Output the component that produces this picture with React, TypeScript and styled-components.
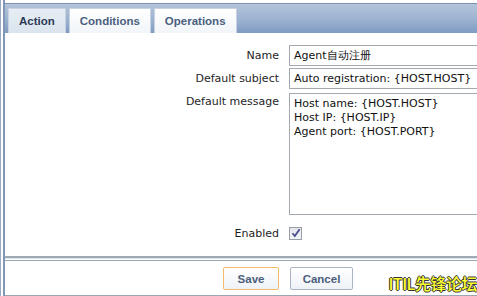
import React from 'react';
import styled, { createGlobalStyle } from 'styled-components';

const GlobalStyle = createGlobalStyle`
  html, body {
    margin: 0;
    padding: 0;
    background: #ffffff;
    overflow: hidden;
  }
  body {
    font-family: "DejaVu Sans", Verdana, sans-serif;
    font-size: 11px;
    color: #222222;
  }
`;

const tabs = ['Action', 'Conditions', 'Operations'];

export default function App() {
  return (
    <>
      <GlobalStyle />
      <Shell>
        <Panel>
          <TabStrip>
            {tabs.map((tab, index) => (
              <Tab key={tab} active={index === 0}>{tab}</Tab>
            ))}
          </TabStrip>

          <FormBody>
            <Label>Name</Label>
            <TextInput>Agent自动注册</TextInput>

            <Label>Default subject</Label>
            <TextInput>Auto registration: {'{HOST.HOST}'}</TextInput>

            <Label top>Default message</Label>
            <TextArea>
              <div>Host name: {'{HOST.HOST}'}</div>
              <div>Host IP: {'{HOST.IP}'}</div>
              <div>Agent port: {'{HOST.PORT}'}</div>
            </TextArea>

            <Label>Enabled</Label>
            <CheckboxCell>
              <Checkbox>
                <svg width="10" height="10" viewBox="0 0 10 10">
                  <path d="M1.5 5.2 L3.8 8 L8.6 1.2" fill="none" stroke="#4a4f8e" strokeWidth="1.8" />
                </svg>
              </Checkbox>
            </CheckboxCell>
          </FormBody>

          <Divider />

          <Footer>
            <Button primary>Save</Button>
            <Button>Cancel</Button>
          </Footer>
        </Panel>
        <Watermark>ITIL先锋论坛</Watermark>
      </Shell>
    </>
  );
}

const Shell = styled.div`
  position: relative;
  width: 477px;
  height: 296px;
  padding-left: 1px;
  box-sizing: border-box;
  border-left: 1px solid #9aaac0;
  overflow: hidden;
`;

const Panel = styled.div`
  display: flex;
  flex-direction: column;
  height: 296px;
  margin-left: 1px;
  border-left: 2px solid #8197b5;
`;

const TabStrip = styled.div`
  display: flex;
  align-items: flex-end;
  gap: 3px;
  height: 29px;
  margin-top: 3px;
  padding-left: 3px;
  border-top: 1px solid #7d92b0;
  background: linear-gradient(#b3c5db, #9cb2d0 55%, #7e9bc3);
`;

const Tab = styled.div<{ active?: boolean }>`
  height: 24px;
  line-height: 25px;
  padding: 0 10px;
  font-family: "Liberation Sans", Arial, sans-serif;
  font-weight: bold;
  font-size: 11.5px;
  color: ${p => (p.active ? '#2c3a58' : '#4b607f')};
  background: ${p => (p.active ? 'linear-gradient(#e6edf4, #dbe4ee)' : 'linear-gradient(#ffffff, #f1f5f9)')};
  border: 1px solid #c7d3e1;
  border-bottom: none;
`;

const FormBody = styled.div`
  display: grid;
  grid-template-columns: 274px 200px;
  column-gap: 10px;
  row-gap: 2px;
  align-items: center;
  align-content: start;
  padding-top: 12px;
  height: 222px;
  box-sizing: border-box;
`;

const Label = styled.div<{ top?: boolean }>`
  text-align: right;
  align-self: ${p => (p.top ? 'start' : 'center')};
  padding-top: ${p => (p.top ? '4px' : '0')};
  color: #1e1e1e;
  white-space: nowrap;
`;

const TextInput = styled.div`
  width: 220px;
  height: 19px;
  line-height: 19px;
  padding: 0 4px;
  border: 1px solid #a4a9b0;
  white-space: nowrap;
  color: #111111;
`;

const TextArea = styled.div`
  width: 220px;
  height: 114px;
  padding: 3px 4px;
  margin: 2px 0 9px;
  border: 1px solid #a4a9b0;
  line-height: 14px;
  color: #111111;
  white-space: nowrap;
`;

const CheckboxCell = styled.div`
  display: flex;
  align-items: center;
  height: 14px;
`;

const Checkbox = styled.div`
  display: flex;
  align-items: center;
  justify-content: center;
  width: 11px;
  height: 11px;
  border: 1px solid #9a9ea6;
  background: linear-gradient(#e4e6ec, #f4f5f8);
`;

const Divider = styled.div`
  height: 2px;
  margin-top: 1px;
  background: #a0aab6;
  border-bottom: 1px solid #dde3ea;
`;

const Footer = styled.div`
  display: flex;
  gap: 11px;
  padding: 6px 0 0 218px;
  height: 36px;
  box-sizing: border-box;
  border-top: 1px solid #9aa6b4;
  border-bottom: 1px solid #9aa6b4;
  margin-top: 1px;
`;

const Button = styled.div<{ primary?: boolean }>`
  display: flex;
  align-items: center;
  justify-content: center;
  height: 21px;
  width: ${p => (p.primary ? '54px' : '61px')};
  font-family: "Liberation Sans", Arial, sans-serif;
  font-weight: bold;
  font-size: 11.5px;
  color: #4c5e7a;
  border: 1px solid ${p => (p.primary ? '#efbb6a' : '#a9b5c5')};
  border-radius: 2px;
  background: linear-gradient(#ffffff, #eef2f7);
`;

const Watermark = styled.div`
  position: absolute;
  right: 0;
  bottom: 1px;
  font-family: "Noto Sans CJK SC", sans-serif;
  font-size: 16px;
  font-weight: 500;
  letter-spacing: -0.5px;
  color: #ffff33;
  text-shadow: 1px 0 0 #333, -1px 0 0 #333, 0 1px 0 #333, 0 -1px 0 #333;
  white-space: nowrap;
`;
